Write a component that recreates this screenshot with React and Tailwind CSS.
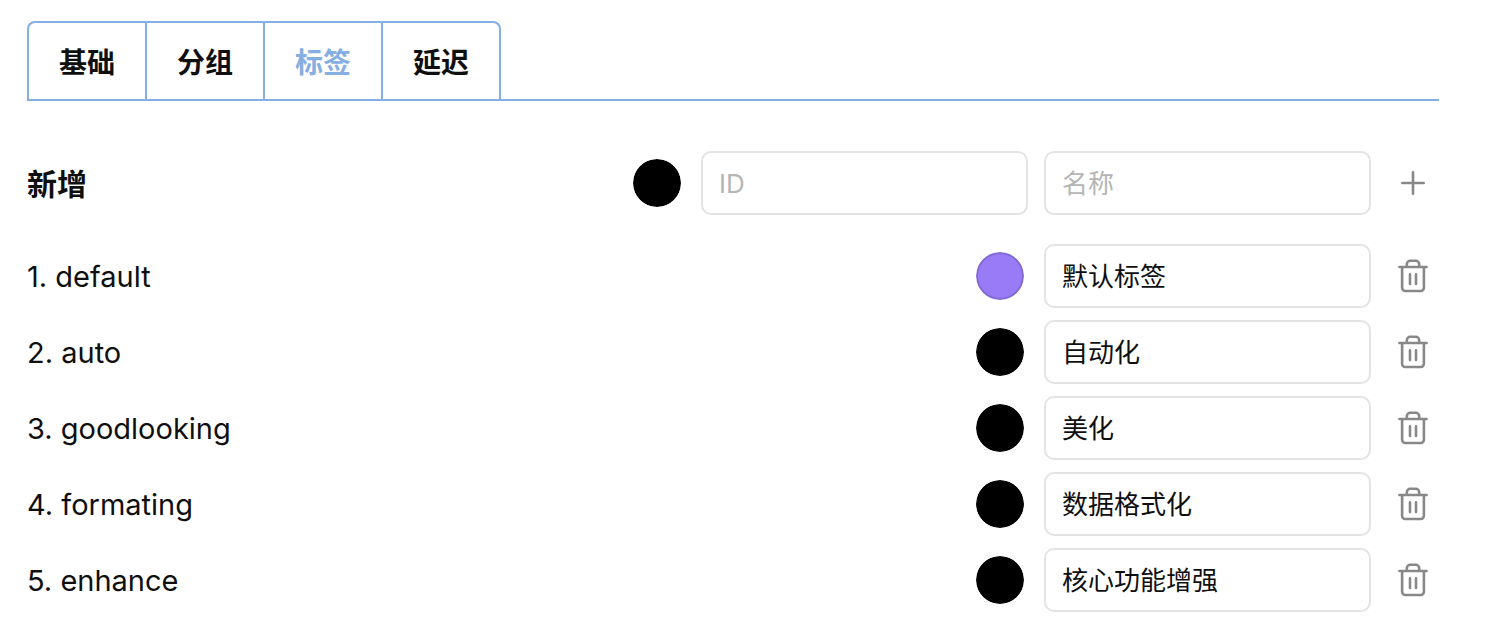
import { useState } from "react";

const TABS = ["基础", "分组", "标签", "延迟"];

const INITIAL_TAGS = [
  { id: "default", name: "默认标签", color: "#997bf7" },
  { id: "auto", name: "自动化", color: "#000000" },
  { id: "goodlooking", name: "美化", color: "#000000" },
  { id: "formating", name: "数据格式化", color: "#000000" },
  { id: "enhance", name: "核心功能增强", color: "#000000" },
];

function PlusIcon() {
  return (
    <svg width="28" height="28" viewBox="0 0 28 28" fill="none" stroke="currentColor" strokeWidth="2.6" strokeLinecap="round" aria-hidden="true">
      <path d="M14 3.3v21.4M3.3 14h21.4" />
    </svg>
  );
}

function TrashIcon() {
  return (
    <svg width="32" height="36" viewBox="0 0 32 36" fill="none" stroke="currentColor" strokeWidth="2.6" strokeLinecap="round" strokeLinejoin="round" aria-hidden="true">
      <path d="M2.4 9h27.2" />
      <path d="M9.8 8.6V6.2a3.4 3.4 0 0 1 3.4-3.4h5.6a3.4 3.4 0 0 1 3.4 3.4v2.4" />
      <path d="M5.1 9.2v20.6a3.2 3.2 0 0 0 3.2 3.2h15.4a3.2 3.2 0 0 0 3.2-3.2V9.2" />
      <path d="M13 16.4v9.6M19 16.4v9.6" />
    </svg>
  );
}

function ColorSwatch({ label, value, onChange }) {
  return (
    <input
      type="color"
      aria-label={label}
      value={value}
      onChange={(e) => onChange(e.target.value)}
      className="mr-1 size-12 shrink-0 cursor-pointer appearance-none rounded-full [&::-webkit-color-swatch-wrapper]:p-0 [&::-webkit-color-swatch]:rounded-full [&::-webkit-color-swatch]:border-2 [&::-webkit-color-swatch]:border-black/15"
    />
  );
}

function TextField({ label, cjk = false, ...props }) {
  return (
    <input
      type="text"
      aria-label={label}
      className={`h-16 w-[327px] min-w-0 rounded-[10px] border-2 border-[#e3e3e3] bg-white px-4 text-[26px] text-[#0f0f0f] outline-none placeholder:text-[#b5b5b5] focus:border-[#85aee2] ${cjk ? "pb-1 font-['Noto_Sans_CJK_SC',sans-serif]" : ""}`}
      {...props}
    />
  );
}

function IconButton({ label, children, ...props }) {
  return (
    <button type="button" aria-label={label} className="flex h-16 w-[52px] shrink-0 items-center justify-center text-[#888888]" {...props}>
      {children}
    </button>
  );
}

export default function App() {
  const [active, setActive] = useState("标签");
  const [tags, setTags] = useState(INITIAL_TAGS);
  const [draft, setDraft] = useState({ id: "", name: "", color: "#000000" });

  const update = (id, patch) =>
    setTags(tags.map((tag) => (tag.id === id ? { ...tag, ...patch } : tag)));

  const addTag = () => {
    if (!draft.id || tags.some((tag) => tag.id === draft.id)) return;
    setTags([...tags, draft]);
    setDraft({ id: "", name: "", color: "#000000" });
  };

  return (
    <main className="bg-white pt-[21px] pr-[51px] pb-4 pl-[27px] font-['Inter','Noto_Sans_CJK_SC',sans-serif] text-[#0f0f0f]">
      <nav role="tablist" className="flex border-b-2 border-[#85aee2]">
        {TABS.map((tab) => (
          <button
            key={tab}
            type="button"
            role="tab"
            aria-selected={tab === active}
            onClick={() => setActive(tab)}
            className={`h-[78px] border-t-2 border-r-2 border-[#85aee2] px-[30px] pt-1 text-[28px] font-bold first:rounded-tl-lg first:border-l-2 last:rounded-tr-lg ${tab === active ? "text-[#85aee2]" : "text-[#0f0f0f]"}`}
          >
            {tab}
          </button>
        ))}
      </nav>

      <section className="mt-[50px] flex items-center gap-4">
        <h2 className="flex-1 pt-0.5 text-[30px] font-bold">新增</h2>
        <ColorSwatch label="新增颜色" value={draft.color} onChange={(color) => setDraft({ ...draft, color })} />
        <TextField label="ID" placeholder="ID" value={draft.id} onChange={(e) => setDraft({ ...draft, id: e.target.value })} />
        <TextField cjk label="名称" placeholder="名称" value={draft.name} onChange={(e) => setDraft({ ...draft, name: e.target.value })} />
        <IconButton label="新增" onClick={addTag}>
          <PlusIcon />
        </IconButton>
      </section>

      <ul className="mt-[29px] flex flex-col gap-3">
        {tags.map((tag, index) => (
          <li key={tag.id} className="flex items-center gap-4">
            <span className="flex-1 pt-0.5 text-[29px]">
              {index + 1}. {tag.id}
            </span>
            <ColorSwatch label={`${tag.id} 颜色`} value={tag.color} onChange={(color) => update(tag.id, { color })} />
            <TextField cjk label={`${tag.id} 名称`} value={tag.name} onChange={(e) => update(tag.id, { name: e.target.value })} />
            <IconButton label={`删除 ${tag.id}`} onClick={() => setTags(tags.filter((t) => t.id !== tag.id))}>
              <TrashIcon />
            </IconButton>
          </li>
        ))}
      </ul>
    </main>
  );
}
